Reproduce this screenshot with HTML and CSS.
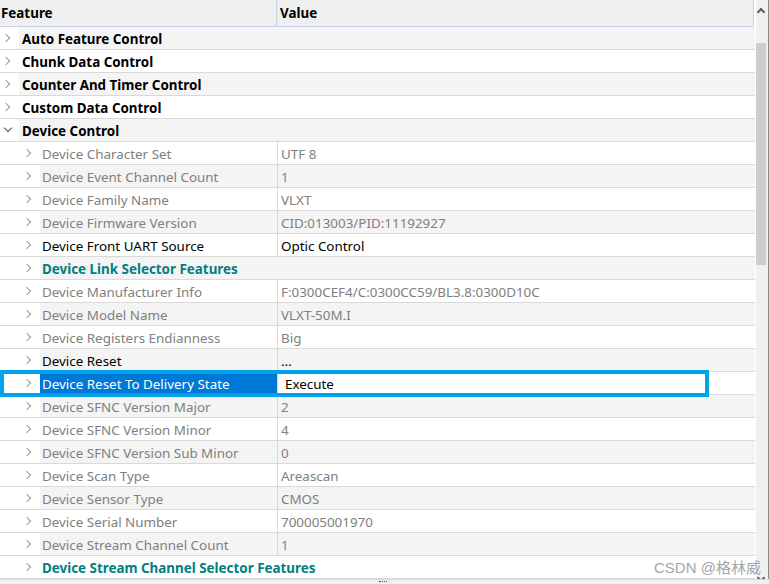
FILE: index.html
```html
<!DOCTYPE html>
<html lang="en">
<head>
    <meta charset="UTF-8">
    <title>Feature Tree</title>
    <link rel="stylesheet" href="styles.css">
</head>
<body>
    <div class="view">
        <div class="table">
            <div class="head">
                <div class="hcell hname">Feature</div>
                <div class="hcell hvalue">Value</div>
            </div>

            <!-- categories -->
            <div class="row cat odd"><div class="indent"><span class="chev"></span></div><div class="cell">Auto Feature Control</div></div>
            <div class="row cat"><div class="indent"><span class="chev"></span></div><div class="cell">Chunk Data Control</div></div>
            <div class="row cat odd"><div class="indent"><span class="chev"></span></div><div class="cell">Counter And Timer Control</div></div>
            <div class="row cat"><div class="indent"><span class="chev"></span></div><div class="cell">Custom Data Control</div></div>
            <div class="row cat odd"><div class="indent"><span class="chev open"></span></div><div class="cell">Device Control</div></div>

            <!-- Device Control children -->
            <div class="row item ro"><div class="indent"><span class="chev"></span></div><div class="name">Device Character Set</div><div class="value">UTF 8</div></div>
            <div class="row item ro odd"><div class="indent"><span class="chev"></span></div><div class="name">Device Event Channel Count</div><div class="value">1</div></div>
            <div class="row item ro"><div class="indent"><span class="chev"></span></div><div class="name">Device Family Name</div><div class="value">VLXT</div></div>
            <div class="row item ro odd"><div class="indent"><span class="chev"></span></div><div class="name">Device Firmware Version</div><div class="value">CID:013003/PID:11192927</div></div>
            <div class="row item"><div class="indent"><span class="chev"></span></div><div class="name">Device Front UART Source</div><div class="value">Optic Control</div></div>
            <div class="row group odd"><div class="indent"><span class="chev"></span></div><div class="cell">Device Link Selector Features</div></div>
            <div class="row item ro"><div class="indent"><span class="chev"></span></div><div class="name">Device Manufacturer Info</div><div class="value">F:0300CEF4/C:0300CC59/BL3.8:0300D10C</div></div>
            <div class="row item ro odd"><div class="indent"><span class="chev"></span></div><div class="name">Device Model Name</div><div class="value">VLXT-50M.I</div></div>
            <div class="row item ro"><div class="indent"><span class="chev"></span></div><div class="name">Device Registers Endianness</div><div class="value">Big</div></div>
            <div class="row item odd"><div class="indent"><span class="chev"></span></div><div class="name">Device Reset</div><div class="value">...</div></div>
            <div class="row item selected"><div class="indent"><span class="chev"></span></div><div class="name">Device Reset To Delivery State</div><div class="value">Execute</div></div>
            <div class="row item ro odd"><div class="indent"><span class="chev"></span></div><div class="name">Device SFNC Version Major</div><div class="value">2</div></div>
            <div class="row item ro"><div class="indent"><span class="chev"></span></div><div class="name">Device SFNC Version Minor</div><div class="value">4</div></div>
            <div class="row item ro odd"><div class="indent"><span class="chev"></span></div><div class="name">Device SFNC Version Sub Minor</div><div class="value">0</div></div>
            <div class="row item ro"><div class="indent"><span class="chev"></span></div><div class="name">Device Scan Type</div><div class="value">Areascan</div></div>
            <div class="row item ro odd"><div class="indent"><span class="chev"></span></div><div class="name">Device Sensor Type</div><div class="value">CMOS</div></div>
            <div class="row item ro"><div class="indent"><span class="chev"></span></div><div class="name">Device Serial Number</div><div class="value">700005001970</div></div>
            <div class="row item ro odd"><div class="indent"><span class="chev"></span></div><div class="name">Device Stream Channel Count</div><div class="value">1</div></div>
            <div class="row group"><div class="indent"><span class="chev"></span></div><div class="cell">Device Stream Channel Selector Features</div></div>
        </div>

        <div class="scrollbar">
            <div class="arrow up"></div>
            <div class="thumb"></div>
            <div class="arrow down"></div>
        </div>
    </div>
    <div class="splitter"><span class="grip"></span></div>

    <!-- highlight box drawn over the selected row -->
    <div class="mark"></div>
    <div class="watermark">CSDN @格林威</div>
</body>
</html>
```

FILE: styles.css
```css
body {
    margin: 0;
    width: 769px;
    height: 584px;
    overflow: hidden;
    font-family: "Noto Sans", "Open Sans", sans-serif;
    font-size: 13.4px;
    color: #000;
    background: #fff;
    position: relative;
}
.view {
    display: flex;
    height: 579px;
    overflow: hidden;
}
.table {
    width: 755px;
    border-right: 1px solid #fff;
}
.head {
    display: flex;
    height: 26px;
    background: #efefef;
    border-bottom: 1px solid #c5d4ec;
    margin-right: 1px;
    border-right: 1px solid #c5d4ec;
    font-weight: bold;
    line-height: 27px;
}
.hname {
    width: 275px;
    padding-left: 1px;
    border-right: 1px solid #c5d4ec;
}
.hvalue {
    flex: 1;
    padding-left: 2px;
    border-left: 1px solid #e4e9f3;
}
.row {
    display: flex;
    height: 22px;
    line-height: 24px;
    border-bottom: 1px solid #d9d9d9;
    background: #fff;
    white-space: nowrap;
}
.indent {
    background: #fff;
    position: relative;
    flex: none;
}
.cat .indent {
    width: 19px;
}
.item .indent,
.group .indent {
    width: 40px;
}
.cell {
    flex: 1;
    padding-left: 3px;
    font-weight: bold;
}
.odd .cell,
.odd .name,
.odd .value {
    background: #f4f4f4;
}
.group .cell {
    color: #00807f;
    padding-left: 2px;
}
.name {
    width: 235px;
    padding-left: 2px;
    border-right: 1px solid #d9d9d9;
}
.value {
    flex: 1;
    padding-left: 3px;
}
.ro .name,
.ro .value {
    color: #808080;
}
.selected .name {
    background: #0078d7;
    color: #fff;
}
.selected .value {
    padding-left: 7px;
}

/* tree chevrons */
.chev {
    position: absolute;
    top: 8px;
    width: 5px;
    height: 5px;
    border-right: 1.2px solid #9a9a9a;
    border-bottom: 1.2px solid #9a9a9a;
    transform: rotate(-45deg);
}
.cat .chev {
    left: 3px;
}
.item .chev,
.group .chev {
    left: 24px;
}
.chev.open {
    top: 6px;
    left: 5px;
    border-color: #555;
    transform: rotate(45deg);
}

.scrollbar {
    width: 12px;
    background: #f0f0f0;
    border-right: 1px solid #8a8a8a;
    position: relative;
}
.thumb {
    position: absolute;
    top: 43px;
    left: 0;
    width: 10px;
    height: 222px;
    background: #cdcdcd;
}
.arrow {
    position: absolute;
    left: 2px;
    width: 4px;
    height: 4px;
    border-left: 2px solid #606060;
    border-top: 2px solid #606060;
}
.arrow.up {
    top: 9px;
    transform: rotate(45deg);
}
.arrow.down {
    bottom: -2px;
    transform: rotate(-135deg);
}
.splitter {
    height: 5px;
    background: #f0f0f0;
    border-top: 1px solid #dcdcdc;
    position: relative;
}
.grip {
    position: absolute;
    left: 379px;
    top: 1px;
    width: 8px;
    height: 2px;
    border-top: 1px dotted #3050a0;
}
.mark {
    position: absolute;
    left: 0;
    top: 370px;
    width: 701px;
    height: 19px;
    border: 4px solid #00a2e8;
}
.watermark {
    position: absolute;
    left: 654px;
    top: 558px;
    font-size: 15px;
    color: #a6a6a6;
    font-family: "Liberation Sans", "Noto Sans CJK SC", sans-serif;
    line-height: 20px;
}
```
